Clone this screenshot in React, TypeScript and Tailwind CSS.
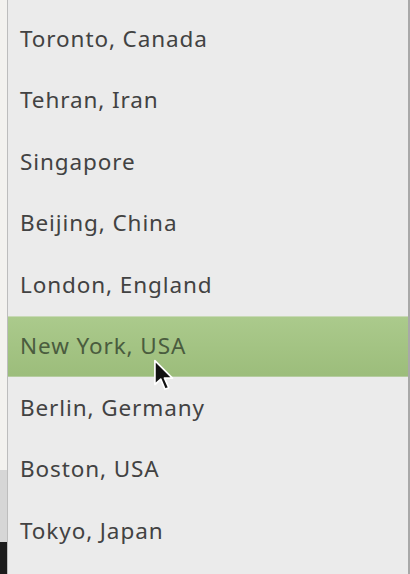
import React from "react";

const cities = [
  "Toronto, Canada",
  "Tehran, Iran",
  "Singapore",
  "Beijing, China",
  "London, England",
  "New York, USA",
  "Berlin, Germany",
  "Boston, USA",
  "Tokyo, Japan",
];

export default function App() {
  return (
    <div className="w-[410px] h-[574px] overflow-hidden flex bg-[#ebebeb]" style={{ fontFamily: '"Noto Sans", "Open Sans", sans-serif' }}>
      <div className="w-[7px] flex flex-col shrink-0">
        <div className="h-[470px] bg-[#f3f2ef]" />
        <div className="h-[72px] bg-[#d6d6d6]" />
        <div className="flex-1 bg-[#1c1c1c]" />
      </div>
      <div className="w-px bg-[#bdbdbd] shrink-0" />
      <div className="flex-1 flex flex-col relative">
        <div className="h-[8px] shrink-0" />
        {cities.map((c) => {
          const sel = c === "New York, USA";
          return (
            <div
              key={c}
              className={
                sel
                  ? "h-[61.5px] shrink-0 flex items-center pl-[12px] text-[22.5px] tracking-[0.9px] text-[#4a5c3e] bg-gradient-to-b from-[#abca8c] to-[#9cbd7b] border-t border-[#c8d9b6] border-b border-b-[#b5cca0]"
                  : "h-[61.5px] shrink-0 flex items-center pl-[12px] text-[22.5px] tracking-[0.9px] text-[#424242]"
              }
            >
              {c}
            </div>
          );
        })}
        <svg className="absolute left-[144px] top-[359px]" width="26" height="34" viewBox="0 0 22 32">
          <path d="M1.5 1.5 L1.5 24 L7 19 L11 28.5 L14.5 27 L10.5 18 L18 18 Z" fill="#111" stroke="#fff" strokeWidth="1.6" strokeLinejoin="round" />
        </svg>
      </div>
      <div className="w-[2px] bg-[#a8a8a8] shrink-0" />
    </div>
  );
}
